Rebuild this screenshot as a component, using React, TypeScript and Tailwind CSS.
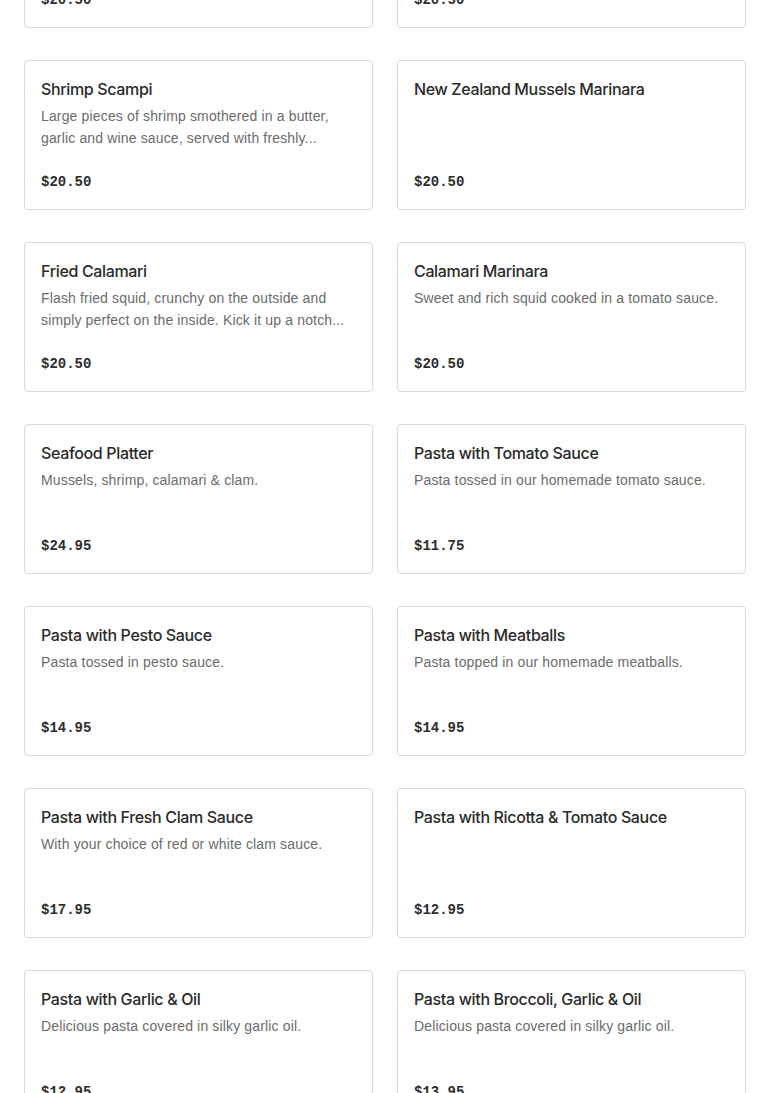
const items = [
  { name: "Baked Clams", desc: "Littleneck clams baked with seasoned breadcrumbs.", price: "$20.50" },
  { name: "Clams Marinara", desc: "Fresh clams simmered in our marinara sauce.", price: "$20.50" },
  {
    name: "Shrimp Scampi",
    desc: "Large pieces of shrimp smothered in a butter, garlic and wine sauce, served with freshly...",
    price: "$20.50",
  },
  { name: "New Zealand Mussels Marinara", desc: "", price: "$20.50" },
  {
    name: "Fried Calamari",
    desc: "Flash fried squid, crunchy on the outside and simply perfect on the inside. Kick it up a notch...",
    price: "$20.50",
  },
  { name: "Calamari Marinara", desc: "Sweet and rich squid cooked in a tomato sauce.", price: "$20.50" },
  { name: "Seafood Platter", desc: "Mussels, shrimp, calamari & clam.", price: "$24.95" },
  { name: "Pasta with Tomato Sauce", desc: "Pasta tossed in our homemade tomato sauce.", price: "$11.75" },
  { name: "Pasta with Pesto Sauce", desc: "Pasta tossed in pesto sauce.", price: "$14.95" },
  { name: "Pasta with Meatballs", desc: "Pasta topped in our homemade meatballs.", price: "$14.95" },
  { name: "Pasta with Fresh Clam Sauce", desc: "With your choice of red or white clam sauce.", price: "$17.95" },
  { name: "Pasta with Ricotta & Tomato Sauce", desc: "", price: "$12.95" },
  { name: "Pasta with Garlic & Oil", desc: "Delicious pasta covered in silky garlic oil.", price: "$12.95" },
  { name: "Pasta with Broccoli, Garlic & Oil", desc: "Delicious pasta covered in silky garlic oil.", price: "$13.95" },
];

function MenuCard({ name, desc, price }: { name: string; desc: string; price: string }) {
  return (
    <div className="flex h-[150px] flex-col rounded-[4px] border border-[#d9d9d9] bg-white px-4 pt-4 pb-[17px]">
      <h3 className="font-['Inter',sans-serif] text-[16px] leading-6 font-medium tracking-[-0.35px] text-[#2a2a2a]">
        {name}
      </h3>
      {desc && (
        <p className="mt-1 line-clamp-2 text-[14px] leading-[22px] tracking-[0.15px] text-[#6b6b6b]">{desc}</p>
      )}
      <div className="mt-auto font-['Liberation_Mono',monospace] text-[14px] leading-5 font-bold text-[#2d2d2d]">
        {price}
      </div>
    </div>
  );
}

export default function App() {
  return (
    <div className="min-h-screen overflow-hidden bg-white font-['Liberation_Sans',Arial,sans-serif]">
      <div className="-mt-[122px] grid grid-cols-2 gap-x-6 gap-y-8 px-6">
        {items.map((item) => (
          <MenuCard key={item.name} {...item} />
        ))}
      </div>
    </div>
  );
}
